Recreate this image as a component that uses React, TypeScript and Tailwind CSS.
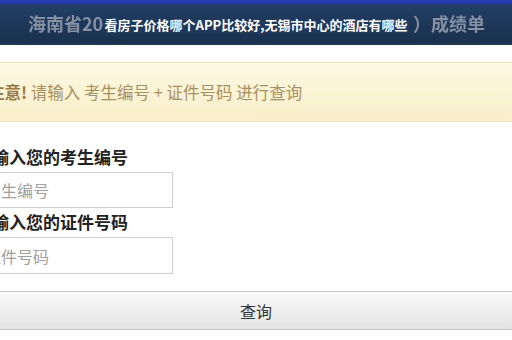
export default function App() {
  return (
    <div className="w-[512px] h-[340px] overflow-hidden bg-white font-['Noto_Sans_CJK_SC',sans-serif]">
      <div className="h-[3px] bg-[#2a3cb4]" />
      <header className="relative h-[42px] bg-gradient-to-b from-[#223f63] to-[#1a3150] border-b-2 border-[#26354a] flex items-center justify-between pl-[28px] pr-[27px]">
        <span className="text-[18px] font-bold leading-none text-[#8591a2] blur-[0.6px]">海南省20</span>
        <span className="text-[18px] font-bold leading-none text-[#8591a2] blur-[0.6px]">）成绩单</span>
        <div className="absolute inset-0 flex items-center justify-center pt-[3px]">
          <span className="px-[2px] py-[3px] bg-[#1f395c] text-[13px] font-bold leading-none text-white">
            看房子价格哪个APP比较好,无锡市中心的酒店有哪些
          </span>
        </div>
      </header>

      <div className="mt-[17px] h-[60px] border-y border-[#ece3bd] bg-gradient-to-b from-[#fdf8e2] to-[#f8efc8] flex items-center">
        <p className="ml-[-12px] text-[16.5px] leading-none whitespace-nowrap text-[#a88f60]">
          <span className="font-bold text-[#9a7a42]">注意!</span> 请输入 考生编号 + 证件号码 进行查询
        </p>
      </div>

      <form className="mt-[25px] ml-[-26px] flex flex-col">
        <label className="ml-[1px] h-[20px] text-[17px] font-bold leading-[20px] text-[#222] whitespace-nowrap">
          请输入您的考生编号
        </label>
        <input
          className="mt-[5px] w-[199px] h-[36px] border border-[#cfcfcf] px-[10px] text-[16px] placeholder:text-[#a0a0a0] outline-none"
          placeholder="考生编号"
        />
        <label className="mt-[4px] ml-[1px] h-[20px] text-[17px] font-bold leading-[20px] text-[#222] whitespace-nowrap">
          请输入您的证件号码
        </label>
        <input
          className="mt-[5px] w-[199px] h-[37px] border border-[#cfcfcf] px-[10px] text-[16px] placeholder:text-[#a0a0a0] outline-none"
          placeholder="证件号码"
        />
      </form>

      <button className="mt-[17px] w-[512px] h-[39px] border-y border-[#c4c4c4] bg-gradient-to-b from-[#fafafa] to-[#e3e3e3] text-[16px] text-[#333]">
        查询
      </button>
    </div>
  );
}
